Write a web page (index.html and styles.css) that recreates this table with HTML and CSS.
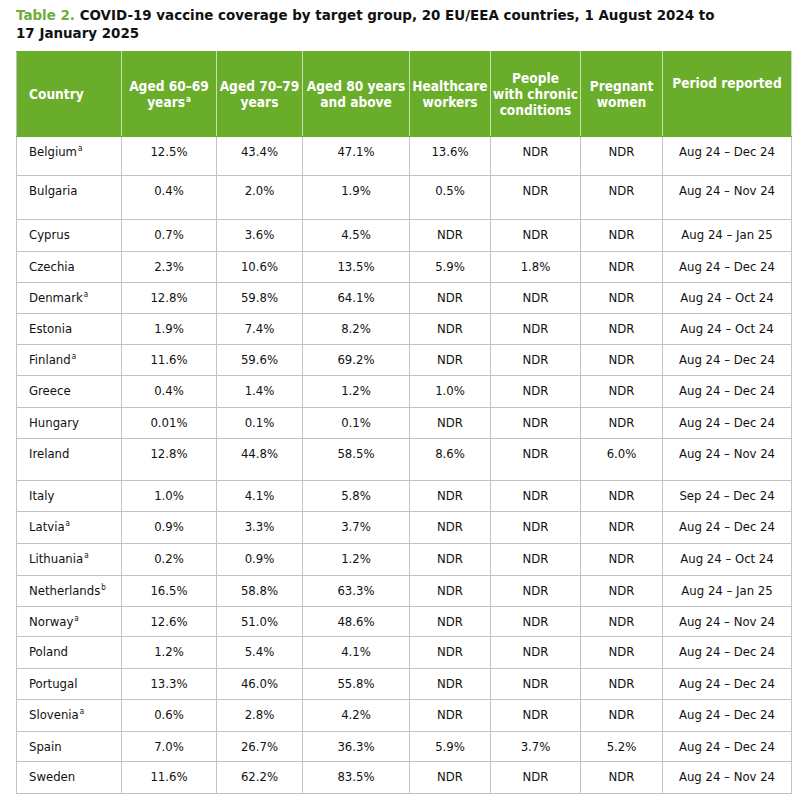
FILE: index.html
```html
<!DOCTYPE html>
<html lang="en">
<head>
<meta charset="utf-8">
<title>Table 2</title>
<link rel="stylesheet" href="styles.css">
</head>
<body>
<h1 class="title"><span class="label">Table 2.</span> COVID-19 vaccine coverage by target group, 20 EU/EEA countries, 1 August 2024 to 17 January 2025</h1>
<table class="cov">
  <colgroup>
    <col class="c1"><col class="c2"><col class="c3"><col class="c4"><col class="c5"><col class="c6"><col class="c7"><col class="c8">
  </colgroup>
  <thead>
    <tr>
      <th class="left">Country</th>
      <th>Aged 60–69 years<sup>a</sup></th>
      <th>Aged 70–79 years</th>
      <th>Aged 80 years and above</th>
      <th>Healthcare workers</th>
      <th>People<br>with chronic conditions</th>
      <th>Pregnant women</th>
      <th class="raised">Period reported</th>
    </tr>
  </thead>
  <tbody>
    <tr class="h39"><td class="left">Belgium<sup>a</sup></td><td>12.5%</td><td>43.4%</td><td>47.1%</td><td>13.6%</td><td>NDR</td><td>NDR</td><td>Aug 24 – Dec 24</td></tr>
    <tr class="h44"><td class="left">Bulgaria</td><td>0.4%</td><td>2.0%</td><td>1.9%</td><td>0.5%</td><td>NDR</td><td>NDR</td><td>Aug 24 – Nov 24</td></tr>
    <tr class="h32"><td class="left">Cyprus</td><td>0.7%</td><td>3.6%</td><td>4.5%</td><td>NDR</td><td>NDR</td><td>NDR</td><td>Aug 24 – Jan 25</td></tr>
    <tr class="h31"><td class="left">Czechia</td><td>2.3%</td><td>10.6%</td><td>13.5%</td><td>5.9%</td><td>1.8%</td><td>NDR</td><td>Aug 24 – Dec 24</td></tr>
    <tr class="h31"><td class="left">Denmark<sup>a</sup></td><td>12.8%</td><td>59.8%</td><td>64.1%</td><td>NDR</td><td>NDR</td><td>NDR</td><td>Aug 24 – Oct 24</td></tr>
    <tr class="h31"><td class="left">Estonia</td><td>1.9%</td><td>7.4%</td><td>8.2%</td><td>NDR</td><td>NDR</td><td>NDR</td><td>Aug 24 – Oct 24</td></tr>
    <tr class="h31"><td class="left">Finland<sup>a</sup></td><td>11.6%</td><td>59.6%</td><td>69.2%</td><td>NDR</td><td>NDR</td><td>NDR</td><td>Aug 24 – Dec 24</td></tr>
    <tr class="h32 nosep"><td class="left">Greece</td><td>0.4%</td><td>1.4%</td><td>1.2%</td><td>1.0%</td><td>NDR</td><td>NDR</td><td>Aug 24 – Dec 24</td></tr>
    <tr class="h31"><td class="left">Hungary</td><td>0.01%</td><td>0.1%</td><td>0.1%</td><td>NDR</td><td>NDR</td><td>NDR</td><td>Aug 24 – Dec 24</td></tr>
    <tr class="h42"><td class="left">Ireland</td><td>12.8%</td><td>44.8%</td><td>58.5%</td><td>8.6%</td><td>NDR</td><td>6.0%</td><td>Aug 24 – Nov 24</td></tr>
    <tr class="h31"><td class="left">Italy</td><td>1.0%</td><td>4.1%</td><td>5.8%</td><td>NDR</td><td>NDR</td><td>NDR</td><td>Sep 24 – Dec 24</td></tr>
    <tr class="h32"><td class="left">Latvia<sup>a</sup></td><td>0.9%</td><td>3.3%</td><td>3.7%</td><td>NDR</td><td>NDR</td><td>NDR</td><td>Aug 24 – Dec 24</td></tr>
    <tr class="h32"><td class="left">Lithuania<sup>a</sup></td><td>0.2%</td><td>0.9%</td><td>1.2%</td><td>NDR</td><td>NDR</td><td>NDR</td><td>Aug 24 – Oct 24</td></tr>
    <tr class="h31 nosep"><td class="left">Netherlands<sup>b</sup></td><td>16.5%</td><td>58.8%</td><td>63.3%</td><td>NDR</td><td>NDR</td><td>NDR</td><td>Aug 24 – Jan 25</td></tr>
    <tr class="h30"><td class="left">Norway<sup>a</sup></td><td>12.6%</td><td>51.0%</td><td>48.6%</td><td>NDR</td><td>NDR</td><td>NDR</td><td>Aug 24 – Nov 24</td></tr>
    <tr class="h32"><td class="left">Poland</td><td>1.2%</td><td>5.4%</td><td>4.1%</td><td>NDR</td><td>NDR</td><td>NDR</td><td>Aug 24 – Dec 24</td></tr>
    <tr class="h31"><td class="left">Portugal</td><td>13.3%</td><td>46.0%</td><td>55.8%</td><td>NDR</td><td>NDR</td><td>NDR</td><td>Aug 24 – Dec 24</td></tr>
    <tr class="h32"><td class="left">Slovenia<sup>a</sup></td><td>0.6%</td><td>2.8%</td><td>4.2%</td><td>NDR</td><td>NDR</td><td>NDR</td><td>Aug 24 – Dec 24</td></tr>
    <tr class="h30"><td class="left">Spain</td><td>7.0%</td><td>26.7%</td><td>36.3%</td><td>5.9%</td><td>3.7%</td><td>5.2%</td><td>Aug 24 – Dec 24</td></tr>
    <tr class="h32"><td class="left">Sweden</td><td>11.6%</td><td>62.2%</td><td>83.5%</td><td>NDR</td><td>NDR</td><td>NDR</td><td>Aug 24 – Nov 24</td></tr>
  </tbody>
</table>
</body>
</html>
```
FILE: styles.css
```css
html, body {
  margin: 0;
  padding: 0;
  background: #ffffff;
}
body {
  padding: 7px 17px 0 16px;
  font-family: "DejaVu Sans Condensed", "DejaVu Sans", sans-serif;
  color: #111111;
}
.title {
  margin: 0 0 8px 0;
  font-family: "DejaVu Sans", sans-serif;
  font-size: 13.45px;
  line-height: 18px;
  font-weight: bold;
  color: #111111;
  width: 720px;
}
.title .label {
  color: #6cae3a;
}
.cov {
  border-collapse: collapse;
  table-layout: fixed;
  width: 775px;
  font-size: 13px;
}
.c1 { width: 105px; }
.c2 { width: 95px; }
.c3 { width: 86px; }
.c4 { width: 107px; }
.c5 { width: 81px; }
.c6 { width: 90px; }
.c7 { width: 82px; }
.c8 { width: 129px; }
.cov th {
  background: #6aad2a;
  color: #ffffff;
  font-weight: bold;
  font-size: 13.6px;
  line-height: 16px;
  height: 85px;
  padding: 0 1px;
  text-align: center;
  vertical-align: middle;
  border-left: 1px solid #c9dfb5;
  border-right: 1px solid #c9dfb5;
  border-top: 1px solid #6aad2a;
  border-bottom: 1px solid #6aad2a;
  box-sizing: border-box;
}
.cov th.left {
  text-align: left;
  padding-left: 12px;
  border-left: 1px solid #bfbfbf;
}
.cov th.raised {
  padding-bottom: 22px;
}
.cov sup {
  font-size: 8px;
  line-height: 0;
  vertical-align: 5px;
  margin-left: 1px;
}
.cov td {
  border: 1px solid #c2c2c2;
  padding: 7px 2px 0 2px;
  line-height: 16px;
  text-align: center;
  vertical-align: top;
  box-sizing: border-box;
  color: #111111;
}
.cov td.left {
  text-align: left;
  padding-left: 12px;
}
.cov tr.nosep td {
  border-top-color: transparent;
}
.h30 td { height: 30px; }
.h31 td { height: 31px; }
.h32 td { height: 32px; }
.h39 td { height: 39px; }
.h42 td { height: 42px; }
.h44 td { height: 44px; }
```
